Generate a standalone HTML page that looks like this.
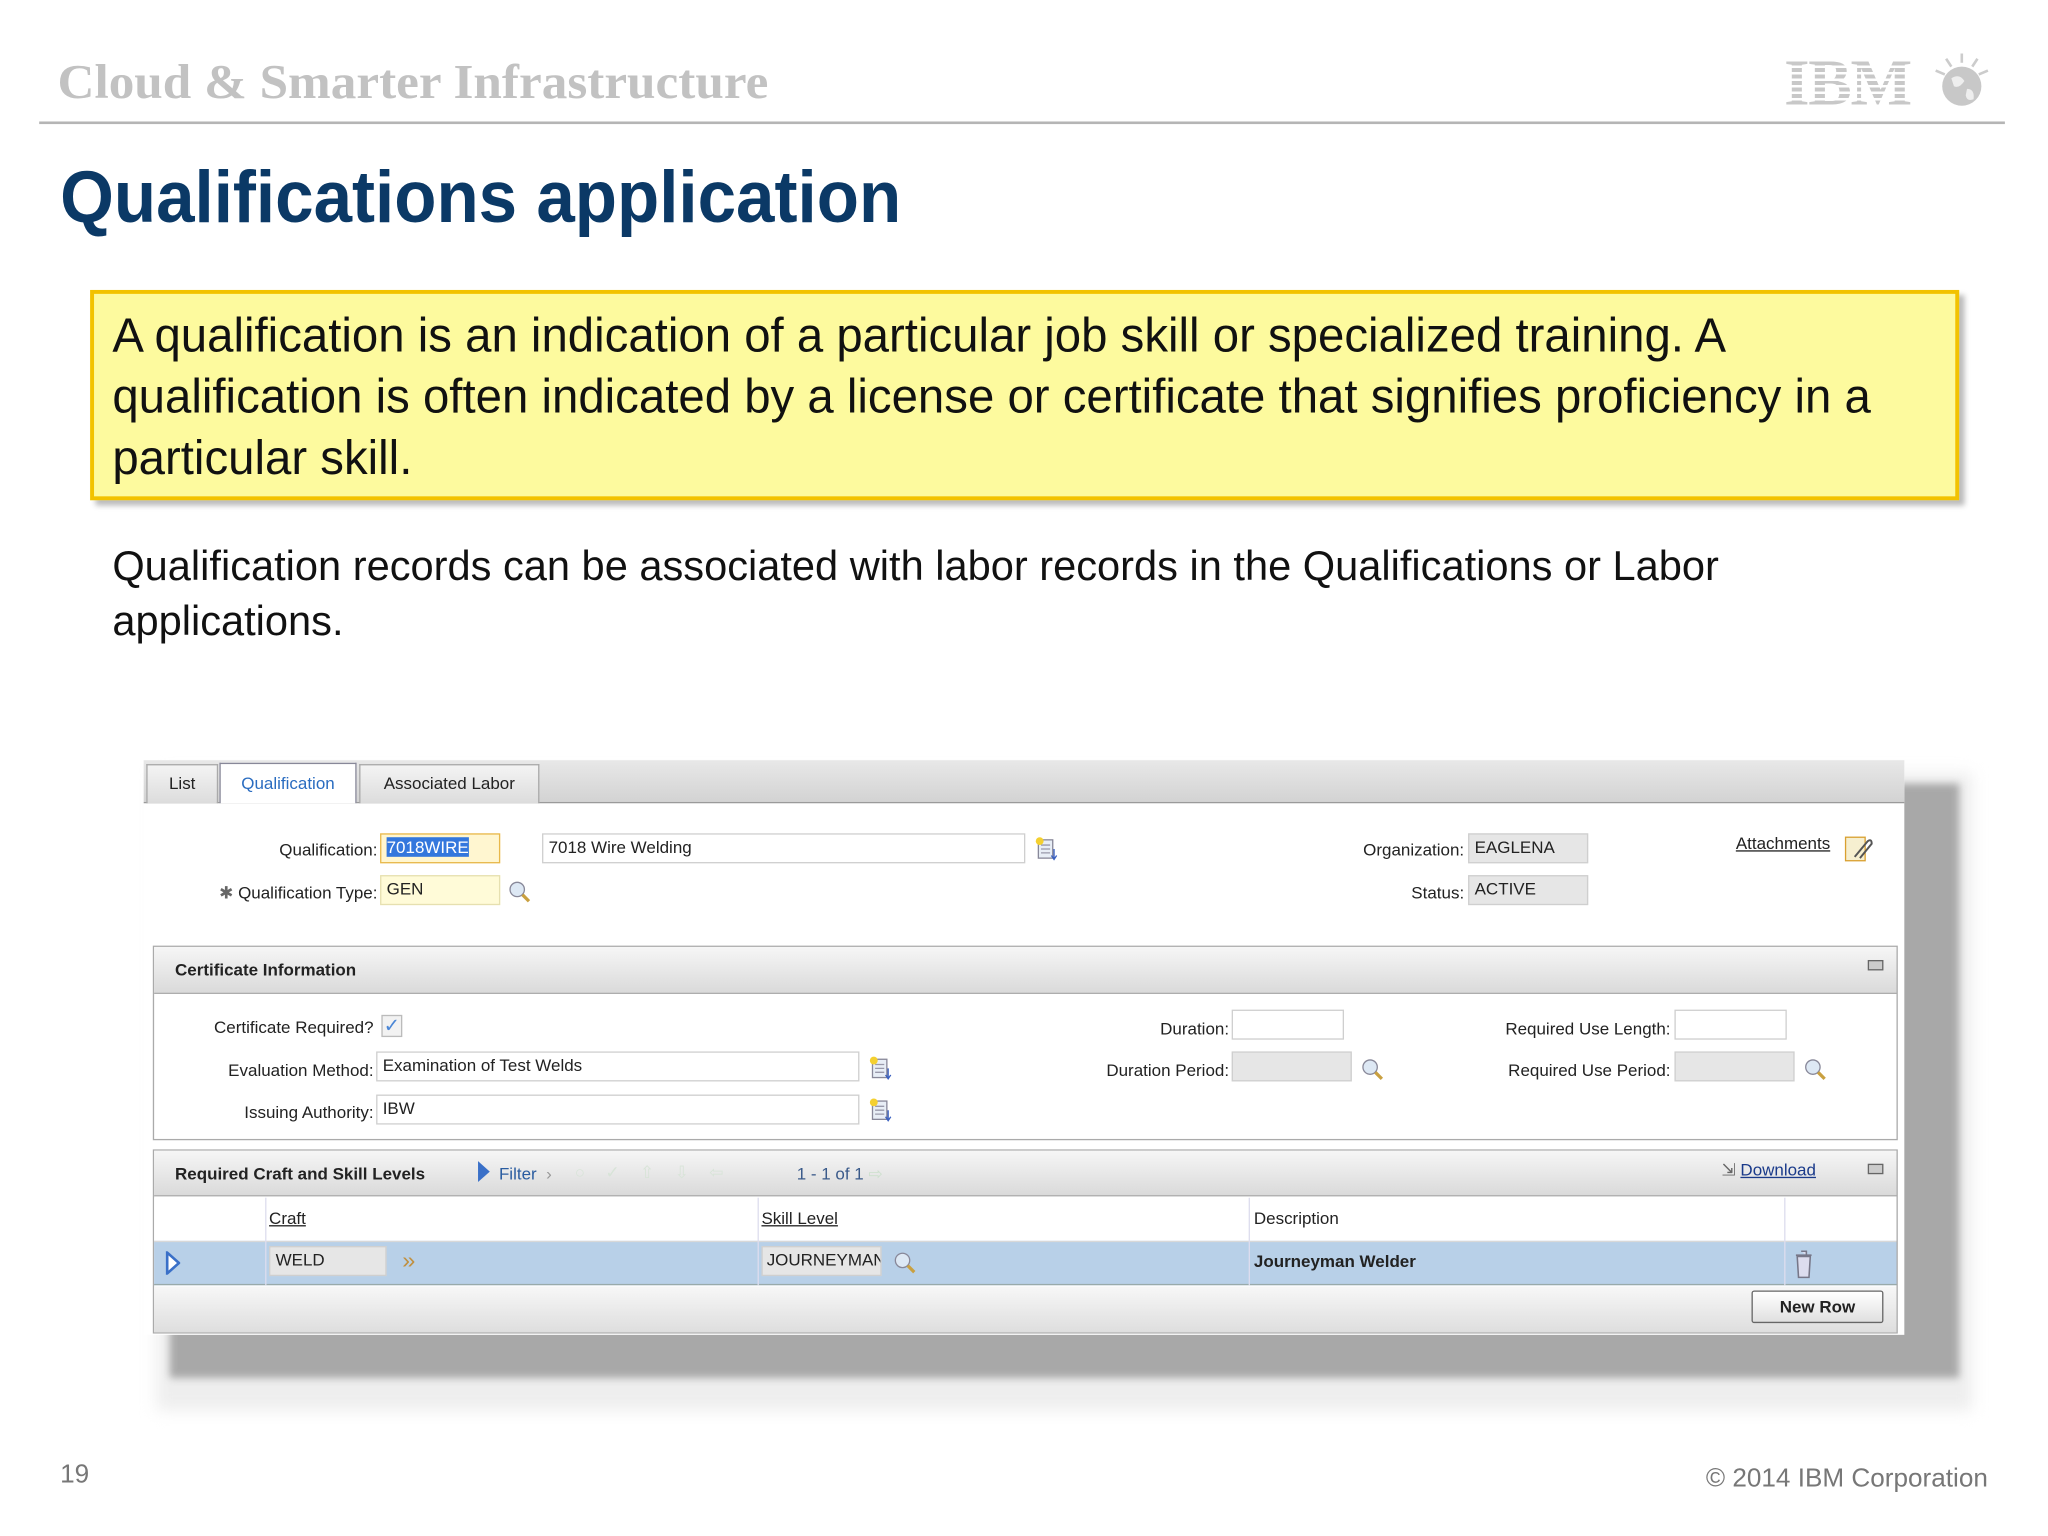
<!DOCTYPE html>
<html><head><meta charset="utf-8"><style>
*{margin:0;padding:0;box-sizing:border-box}
html,body{width:2048px;height:1536px;overflow:hidden;background:#fff}
#w{position:absolute;left:0;top:0;width:1568px;height:1176px;transform:scale(1.306122);transform-origin:0 0;font-family:"Liberation Sans",sans-serif}
.a{position:absolute;white-space:nowrap}
.sx{display:inline-block;transform-origin:0 0}
.ui{font-size:13px;color:#222}
.lbl{position:absolute;font-size:13px;color:#222;text-align:right;white-space:nowrap}
.inp{position:absolute;height:23px;border:1px solid #cfcfcf;background:#fff;font-size:13px;padding:2px 4px;color:#222;white-space:nowrap;overflow:hidden}
.ro{background:#e6e6e6}
.mag{position:absolute;width:18px;height:18px}
.doc{position:absolute;width:18px;height:20px}
</style></head><body><div id="w">

<div class="a" style="left:44px;top:42px;font-family:'Liberation Serif',serif;font-weight:bold;font-size:37px;color:#c2c2c2"><span class="sx" style="transform:scaleX(1.06)">Cloud &amp; Smarter Infrastructure</span></div>
<div class="a" style="left:30px;top:93px;width:1505px;height:2px;background:#b5b5b5"></div>
<div class="a" style="left:1366px;top:34px;font-family:'Liberation Serif',serif;font-weight:bold;font-size:50px;color:#c8c8c8;letter-spacing:-1px">IBM</div>
<div class="a" style="left:1364px;top:40px;width:110px;height:42px;background:repeating-linear-gradient(#fff 0 2px,transparent 2px 5px)"></div>
<svg class="a" style="left:1478px;top:38px" width="48" height="46" viewBox="0 0 48 46"><circle cx="24" cy="28" r="15" fill="#c8c8c8"/><path d="M16 22 q6 -4 10 2 q-4 6 -8 4z M28 30 q6 0 5 8 q-5 2 -6 -3z" fill="#eee"/><path d="M24 3v7 M12 7l4 6 M36 7l-4 6 M4 16l7 3 M44 16l-7 3" stroke="#ccc" stroke-width="2"/></svg>

<div class="a" style="left:46px;top:118px;font-weight:bold;font-size:56px;color:#0b3966"><span class="sx" style="transform:scaleX(.945)">Qualifications application</span></div>

<div class="a" style="left:69px;top:222px;width:1431px;height:161px;background:#fdfa9e;border:3px solid #f2c200;box-shadow:4px 4px 4px #bbb"></div>
<div class="a" style="left:86px;top:233px;font-size:37px;line-height:47px;color:#111"><span class="sx" style="transform:scaleX(.98)">A qualification is an indication of a particular job skill or specialized training. A<br>qualification is often indicated by a license or certificate that signifies proficiency in a<br>particular skill.</span></div>

<div class="a" style="left:86px;top:412px;font-size:32px;line-height:42px;color:#111"><span class="sx" style="transform:scaleX(.995)">Qualification records can be associated with labor records in the Qualifications or Labor<br>applications.</span></div>

<!-- shadow -->
<div class="a" style="left:120px;top:592px;width:1390px;height:488px;background:#eee;filter:blur(6px)"></div>
<div class="a" style="left:130px;top:600px;width:1370px;height:455px;background:#a8a8a8;filter:blur(3px)"></div>
<!-- panel -->
<div class="a" style="left:110px;top:582px;width:1348px;height:440px;background:#fff"></div>
<div class="a" style="left:110px;top:582px;width:1348px;height:33px;background:linear-gradient(#e8e8e8,#d3d3d3);border-bottom:1px solid #9a9a9a"></div>
<div class="a ui" style="left:112px;top:585px;width:55px;height:30px;background:linear-gradient(#f4f4f4,#dcdcdc);border:1px solid #aaa;border-bottom:none;text-align:center;line-height:28px">List</div>
<div class="a ui" style="left:168px;top:584px;width:105px;height:31px;background:#fff;border:1px solid #889;border-bottom:none;text-align:center;line-height:29px;color:#2a6cc0">Qualification</div>
<div class="a ui" style="left:275px;top:585px;width:138px;height:30px;background:linear-gradient(#f4f4f4,#dcdcdc);border:1px solid #aaa;border-bottom:none;text-align:center;line-height:28px">Associated Labor</div>

<div class="lbl" style="right:1279px;top:643px">Qualification:</div>
<div class="inp" style="left:291px;top:638px;width:92px;border-color:#e8b84a;background:#fff6d0"><span style="background:#3377dd;color:#fff">7018WIRE</span></div>
<div class="inp" style="left:415px;top:638px;width:370px">7018 Wire Welding</div>
<div class="lbl" style="right:1279px;top:676px"><span style="color:#666">✱</span> Qualification Type:</div>
<div class="inp" style="left:291px;top:670px;width:92px;background:#fffbd8;border-color:#e6e0b0">GEN</div>
<div class="lbl" style="right:447px;top:643px">Organization:</div>
<div class="inp ro" style="left:1124px;top:638px;width:92px">EAGLENA</div>
<div class="lbl" style="right:447px;top:676px">Status:</div>
<div class="inp ro" style="left:1124px;top:670px;width:92px">ACTIVE</div>
<div class="a ui" style="left:1329px;top:638px;text-decoration:underline">Attachments</div>
<svg class="a" style="left:1411px;top:638px" width="24" height="24"><rect x="2" y="3" width="15" height="18" fill="#f6efd0" stroke="#d9a030"/><path d="M9 18 L19 6 q3 -2 3 2 L13 19" fill="none" stroke="#555" stroke-width="1.5"/></svg>

<!-- cert section -->
<div class="a" style="left:117px;top:724px;width:1336px;height:149px;border:1px solid #aaa;background:#fff"></div>
<div class="a" style="left:118px;top:725px;width:1334px;height:36px;background:linear-gradient(#f6f6f6,#dadada);border-bottom:1px solid #aaa"></div>
<div class="a ui" style="left:134px;top:735px;font-weight:bold">Certificate Information</div>
<div class="a" style="left:1430px;top:735px;width:12px;height:8px;border:1px solid #666;background:#ccc"></div>
<div class="lbl" style="right:1282px;top:779px">Certificate Required?</div>
<div class="a" style="left:292px;top:777px;width:16px;height:17px;border:1px solid #bbb;background:#f2f2f2;color:#4a86d6;font-size:15px;line-height:15px;text-align:center">✓</div>
<div class="lbl" style="right:1282px;top:812px">Evaluation Method:</div>
<div class="inp" style="left:288px;top:805px;width:370px">Examination of Test Welds</div>
<div class="lbl" style="right:1282px;top:844px">Issuing Authority:</div>
<div class="inp" style="left:288px;top:838px;width:370px">IBW</div>
<div class="lbl" style="right:627px;top:780px">Duration:</div>
<div class="inp" style="left:943px;top:773px;width:86px"></div>
<div class="lbl" style="right:627px;top:812px">Duration Period:</div>
<div class="inp ro" style="left:943px;top:805px;width:92px"></div>
<div class="lbl" style="right:289px;top:780px">Required Use Length:</div>
<div class="inp" style="left:1282px;top:773px;width:86px"></div>
<div class="lbl" style="right:289px;top:812px">Required Use Period:</div>
<div class="inp ro" style="left:1282px;top:805px;width:92px"></div>

<!-- table section -->
<div class="a" style="left:117px;top:880px;width:1336px;height:141px;border:1px solid #aaa;background:#fff"></div>
<div class="a" style="left:118px;top:881px;width:1334px;height:35px;background:linear-gradient(#f6f6f6,#dadada);border-bottom:1px solid #aaa"></div>
<div class="a ui" style="left:134px;top:891px;font-weight:bold">Required Craft and Skill Levels</div>
<svg class="a" style="left:364px;top:888px" width="12" height="18"><path d="M2 1 L11 9 L2 17z" fill="#3a70c8"/></svg>
<div class="a ui" style="left:382px;top:891px;color:#2a5ca0">Filter &nbsp;<span style="color:#999">›</span></div>
<div class="a ui" style="left:440px;top:890px;color:#d8e4d8;letter-spacing:6px">○ ✓ ⇧ ⇩ ⇦</div>
<div class="a ui" style="left:610px;top:891px;color:#3a5a8a">1 - 1 of 1 <span style="color:#cde0cd">⇨</span></div>
<div class="a ui" style="left:1318px;top:888px;color:#666">⇲ <span style="color:#1a3a8a;text-decoration:underline">Download</span></div>
<div class="a" style="left:1430px;top:891px;width:12px;height:8px;border:1px solid #666;background:#ccc"></div>
<div class="a" style="left:118px;top:917px;width:1334px;height:33px;background:#fff"></div>
<div class="a ui" style="left:206px;top:925px;text-decoration:underline">Craft</div>
<div class="a ui" style="left:583px;top:925px;text-decoration:underline">Skill Level</div>
<div class="a ui" style="left:960px;top:925px">Description</div>
<div class="a" style="left:118px;top:950px;width:1334px;height:34px;background:#b8d0e8;border-top:1px solid #d8d8d8;border-bottom:1px solid #9aa"></div>
<div class="a" style="left:203px;top:917px;width:1px;height:67px;background:#dde"></div>
<div class="a" style="left:580px;top:917px;width:1px;height:67px;background:#dde"></div>
<div class="a" style="left:956px;top:917px;width:1px;height:67px;background:#dde"></div>
<div class="a" style="left:1366px;top:917px;width:1px;height:67px;background:#dde"></div>
<svg class="a" style="left:126px;top:958px" width="12" height="18"><path d="M2 1 L11 9 L2 17z" fill="#fff" stroke="#3a70c8" stroke-width="2"/></svg>
<div class="inp ro" style="left:206px;top:954px;width:90px">WELD</div>
<div class="a" style="left:308px;top:955px;font-size:18px;color:#c09040">»</div>
<div class="inp ro" style="left:583px;top:954px;width:92px;padding-left:3px">JOURNEYMAN</div>
<div class="a ui" style="left:960px;top:958px;font-weight:bold">Journeyman Welder</div>
<svg class="a" style="left:1372px;top:956px" width="18" height="24"><path d="M4 6h10l-1 16h-8z M3 5h12 M7 2h4v3" fill="#dde" stroke="#778" stroke-width="1.2"/></svg>
<div class="a" style="left:118px;top:985px;width:1334px;height:35px;background:linear-gradient(#f7f7f7,#dedede)"></div>
<div class="a ui" style="left:1341px;top:988px;width:101px;height:25px;border:1px solid #666;border-radius:2px;background:linear-gradient(#fff,#e0e0e0);text-align:center;line-height:23px;font-weight:bold">New Row</div>

<!-- icons -->
<svg class="mag" style="left:389px;top:674px" viewBox="0 0 18 18"><circle cx="7" cy="7" r="5.5" fill="#dde8f4" stroke="#889"/><path d="M11 11l5 5" stroke="#c9a040" stroke-width="2.5"/></svg>
<svg class="mag" style="left:1042px;top:810px" viewBox="0 0 18 18"><circle cx="7" cy="7" r="5.5" fill="#dde8f4" stroke="#889"/><path d="M11 11l5 5" stroke="#c9a040" stroke-width="2.5"/></svg>
<svg class="mag" style="left:1381px;top:810px" viewBox="0 0 18 18"><circle cx="7" cy="7" r="5.5" fill="#dde8f4" stroke="#889"/><path d="M11 11l5 5" stroke="#c9a040" stroke-width="2.5"/></svg>
<svg class="mag" style="left:684px;top:958px" viewBox="0 0 18 18"><circle cx="7" cy="7" r="5.5" fill="#dde8f4" stroke="#889"/><path d="M11 11l5 5" stroke="#c9a040" stroke-width="2.5"/></svg>
<svg class="doc" style="left:792px;top:640px" viewBox="0 0 18 20"><rect x="3" y="3" width="11" height="14" fill="#e8eef6" stroke="#889"/><path d="M5 7h7M5 10h7M5 13h7" stroke="#99a"/><circle cx="4" cy="4" r="3" fill="#f4d030"/><path d="M15 10v8M13 15l2 3 2-3" stroke="#3a60c0" fill="none"/></svg>
<svg class="doc" style="left:665px;top:808px" viewBox="0 0 18 20"><rect x="3" y="3" width="11" height="14" fill="#e8eef6" stroke="#889"/><path d="M5 7h7M5 10h7M5 13h7" stroke="#99a"/><circle cx="4" cy="4" r="3" fill="#f4d030"/><path d="M15 10v8M13 15l2 3 2-3" stroke="#3a60c0" fill="none"/></svg>
<svg class="doc" style="left:665px;top:840px" viewBox="0 0 18 20"><rect x="3" y="3" width="11" height="14" fill="#e8eef6" stroke="#889"/><path d="M5 7h7M5 10h7M5 13h7" stroke="#99a"/><circle cx="4" cy="4" r="3" fill="#f4d030"/><path d="M15 10v8M13 15l2 3 2-3" stroke="#3a60c0" fill="none"/></svg>

<div class="a" style="left:46px;top:1118px;font-size:20px;color:#777">19</div>
<div class="a" style="right:46px;top:1121px;font-size:20px;color:#777">© 2014 IBM Corporation</div>
</div></body></html>
